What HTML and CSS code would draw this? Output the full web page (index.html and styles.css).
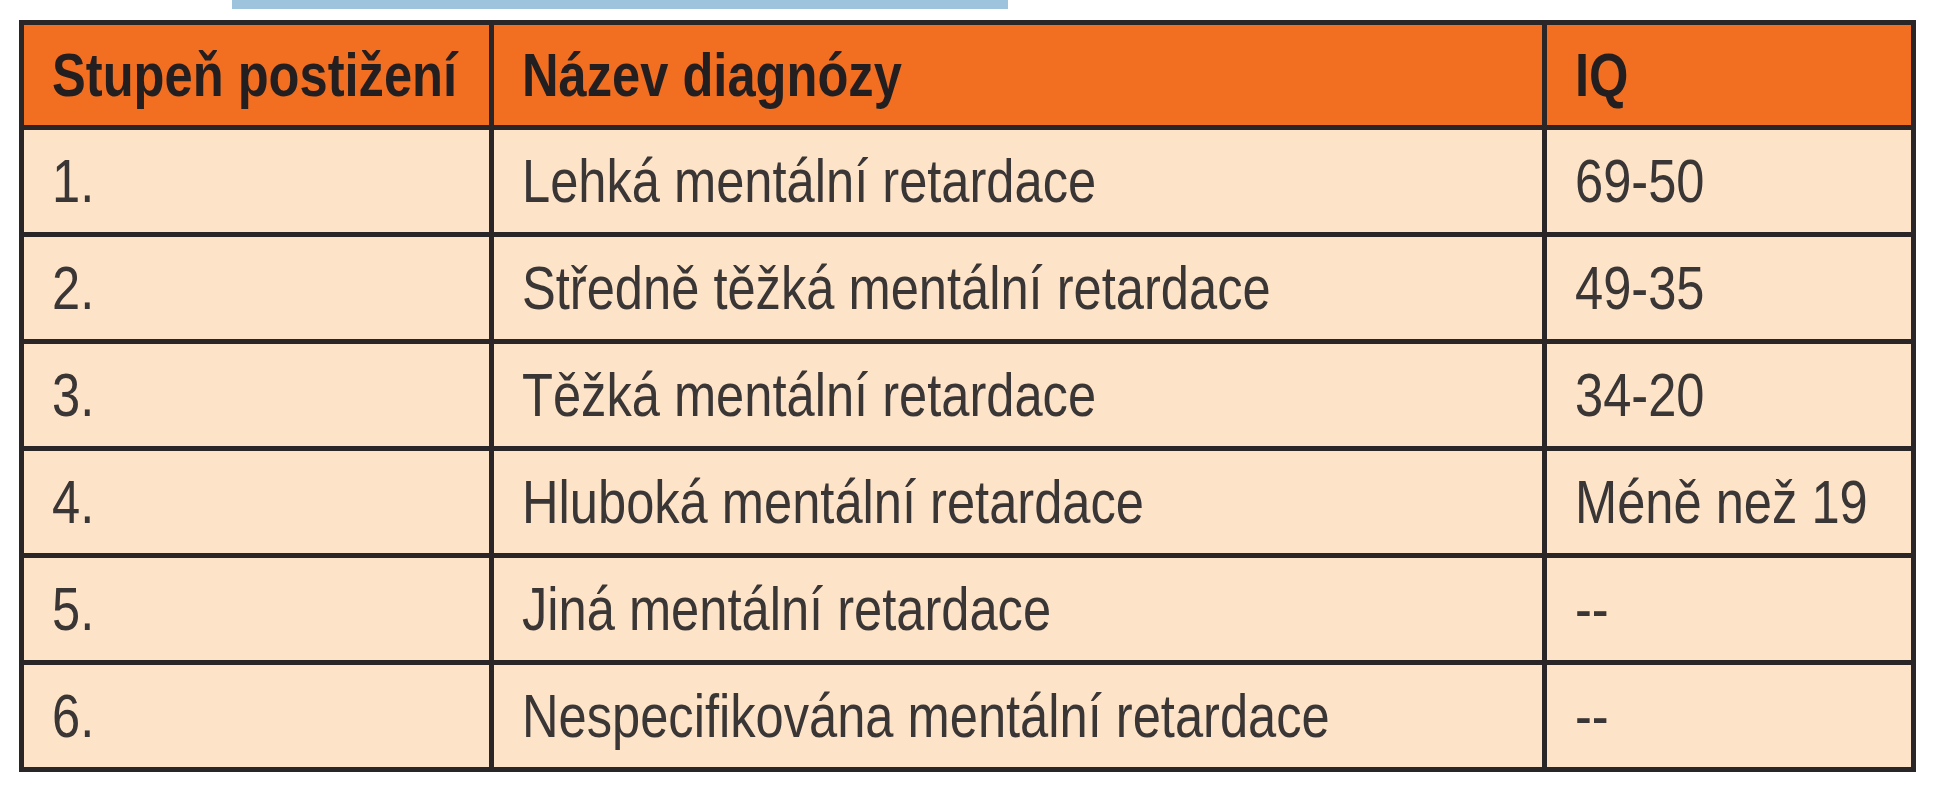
FILE: index.html
```html
<!DOCTYPE html>
<html lang="cs">
<head>
<meta charset="utf-8">
<title>Stupně mentální retardace</title>
<link rel="stylesheet" href="styles.css">
</head>
<body>
<div class="topbar"></div>
<div class="wrap">
<table class="grid">
  <colgroup>
    <col class="c1">
    <col class="c2">
    <col class="c3">
  </colgroup>
  <thead>
    <tr><th><span class="t">Stupeň postižení</span></th><th><span class="t">Název diagnózy</span></th><th><span class="t">IQ</span></th></tr>
  </thead>
  <tbody>
    <tr><td><span class="t">1.</span></td><td><span class="t">Lehká mentální retardace</span></td><td><span class="t">69-50</span></td></tr>
    <tr><td><span class="t">2.</span></td><td><span class="t">Středně těžká mentální retardace</span></td><td><span class="t">49-35</span></td></tr>
    <tr><td><span class="t">3.</span></td><td><span class="t">Těžká mentální retardace</span></td><td><span class="t">34-20</span></td></tr>
    <tr><td><span class="t">4.</span></td><td><span class="t">Hluboká mentální retardace</span></td><td><span class="t">Méně než 19</span></td></tr>
    <tr><td><span class="t">5.</span></td><td><span class="t">Jiná mentální retardace</span></td><td><span class="t">--</span></td></tr>
    <tr><td><span class="t">6.</span></td><td><span class="t">Nespecifikována mentální retardace</span></td><td><span class="t">--</span></td></tr>
  </tbody>
</table>
</div>
</body>
</html>
```
FILE: styles.css
```css
html, body {
  margin: 0;
  padding: 0;
  background: #ffffff;
}
body {
  font-family: "Liberation Sans", Arial, sans-serif;
}
.topbar {
  margin-left: 232px;
  width: 776px;
  height: 9px;
  background: #9ec3dc;
}
.wrap {
  margin-left: 19px;
  margin-top: 11px;
}
.grid {
  border-collapse: separate;
  border-spacing: 5px;
  background: #2a2628;
  table-layout: fixed;
  width: 1897px;
}
.c1 { width: 465px; }
.c2 { width: 1048px; }
.c3 { width: 364px; }
.grid th,
.grid td {
  padding: 0 0 0 28px;
  text-align: left;
  vertical-align: middle;
  font-size: 61px;
  line-height: 1;
  white-space: nowrap;
}
.t {
  display: inline-block;
  transform: scaleX(0.83);
  transform-origin: left center;
  margin-right: -20%;
}
.grid th {
  height: 100px;
  background: #f26f22;
  color: #231f20;
  font-weight: bold;
}
.grid td {
  height: 102px;
  background: #fde3c8;
  color: #3a3636;
  font-weight: normal;
}
```
